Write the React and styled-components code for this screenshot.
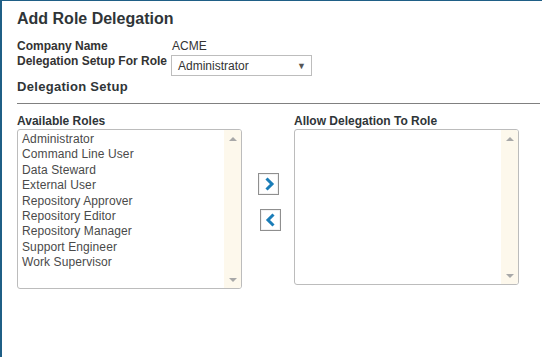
import React from "react";
import styled, { createGlobalStyle } from "styled-components";

const GlobalStyle = createGlobalStyle`
  html, body {
    margin: 0;
    padding: 0;
    background: #fff;
  }
  body {
    font-family: "Liberation Sans", Arial, sans-serif;
    color: #333;
  }
`;

const Page = styled.div`
  width: 542px;
  height: 357px;
  box-sizing: border-box;
  border-top: 1px solid #1f5f86;
  border-left: 2px solid #1f5f86;
  padding: 8px 0 0 15px;
  overflow: hidden;
`;

const Title = styled.h1`
  margin: 0;
  font-size: 16px;
  line-height: 20px;
  font-weight: bold;
  color: #2f3538;
`;

const Form = styled.div`
  margin-top: 10px;
  display: flex;
  flex-direction: column;
`;

const FormRow = styled.div`
  display: flex;
  align-items: flex-start;
  height: ${(props) => props.h}px;
`;

const Label = styled.div`
  width: 155px;
  font-size: 12px;
  line-height: 15px;
  font-weight: bold;
  color: #333;
`;

const Value = styled.div`
  font-size: 12px;
  line-height: 15px;
  color: #333;
`;

const Select = styled.div`
  margin-top: 1px;
  margin-left: -1px;
  width: 141px;
  height: 21px;
  box-sizing: border-box;
  border: 1px solid #bdbdbd;
  display: flex;
  align-items: center;
  justify-content: space-between;
  padding: 0 5px 0 6px;
  font-size: 12px;
  color: #333;
`;

const Caret = styled.span`
  font-size: 9px;
  color: #555;
`;

const SectionTitle = styled.h2`
  margin: 2px 0 0;
  font-size: 13px;
  line-height: 16px;
  font-weight: bold;
  letter-spacing: 0.3px;
  color: #2f3538;
`;

const Rule = styled.hr`
  margin: 8px 0 0 0;
  border: 0;
  height: 1px;
  background: #808080;
  width: 523px;
`;

const Columns = styled.div`
  margin-top: 10px;
  display: flex;
  align-items: flex-start;
`;

const Column = styled.div`
  display: flex;
  flex-direction: column;
`;

const ColumnLabel = styled.div`
  font-size: 12px;
  line-height: 14px;
  font-weight: bold;
  color: #2f3538;
  margin-bottom: 1px;
`;

const ListBox = styled.div`
  width: 225px;
  height: ${(props) => props.h}px;
  box-sizing: border-box;
  border: 1px solid #bcbcbc;
  border-radius: 3px;
  display: flex;
  overflow: hidden;
`;

const Items = styled.ul`
  flex: 1;
  margin: 0;
  list-style: none;
  padding: 2px 0 0 4px;
`;

const Item = styled.li`
  font-size: 12px;
  line-height: 15.4px;
  letter-spacing: 0.1px;
  color: #4a4a4a;
`;

const ScrollTrack = styled.div`
  width: 17px;
  background: #fdf8ec;
  display: flex;
  flex-direction: column;
  justify-content: space-between;
  align-items: center;
  padding: 7px 0 6px;
`;

const Arrow = styled.div`
  width: 0;
  height: 0;
  border-left: 4px solid transparent;
  border-right: 4px solid transparent;
  ${(props) =>
    props.down
      ? "border-top: 4px solid #a8a8a8;"
      : "border-bottom: 4px solid #a8a8a8;"}
`;

const Mover = styled.div`
  width: 52px;
  display: flex;
  flex-direction: column;
  padding-top: 59px;
  gap: 14px;
`;

const MoveButton = styled.button`
  width: 21px;
  height: 22px;
  margin-left: ${(props) => props.offset}px;
  padding: 0;
  box-sizing: border-box;
  border: 1px solid #8f8f8f;
  background: #fff;
  display: flex;
  align-items: center;
  justify-content: center;
  box-shadow: inset 0 0 0 1px #f2f2f2;
`;

const roles = [
  "Administrator",
  "Command Line User",
  "Data Steward",
  "External User",
  "Repository Approver",
  "Repository Editor",
  "Repository Manager",
  "Support Engineer",
  "Work Supervisor",
];

const Chevron = ({ left }) => (
  <svg width="12" height="14" viewBox="0 0 12 14">
    <polyline
      points={left ? "8.5,1.5 3,7 8.5,12.5" : "3.5,1.5 9,7 3.5,12.5"}
      fill="none"
      stroke="#1a7db8"
      strokeWidth="3"
    />
  </svg>
);

const List = ({ items, h }) => (
  <ListBox h={h}>
    <Items>
      {items.map((r) => (
        <Item key={r}>{r}</Item>
      ))}
    </Items>
    <ScrollTrack>
      <Arrow />
      <Arrow down />
    </ScrollTrack>
  </ListBox>
);

export default function App() {
  return (
    <Page>
      <GlobalStyle />
      <Title>Add Role Delegation</Title>
      <Form>
        <FormRow h={15}>
          <Label>Company Name</Label>
          <Value>ACME</Value>
        </FormRow>
        <FormRow h={23}>
          <Label>Delegation Setup For Role</Label>
          <Select>
            <span>Administrator</span>
            <Caret>▼</Caret>
          </Select>
        </FormRow>
      </Form>
      <SectionTitle>Delegation Setup</SectionTitle>
      <Rule />
      <Columns>
        <Column>
          <ColumnLabel>Available Roles</ColumnLabel>
          <List items={roles} h={160} />
        </Column>
        <Mover>
          <MoveButton offset={16}>
            <Chevron />
          </MoveButton>
          <MoveButton offset={18}>
            <Chevron left />
          </MoveButton>
        </Mover>
        <Column>
          <ColumnLabel>Allow Delegation To Role</ColumnLabel>
          <List items={[]} h={156} />
        </Column>
      </Columns>
    </Page>
  );
}
